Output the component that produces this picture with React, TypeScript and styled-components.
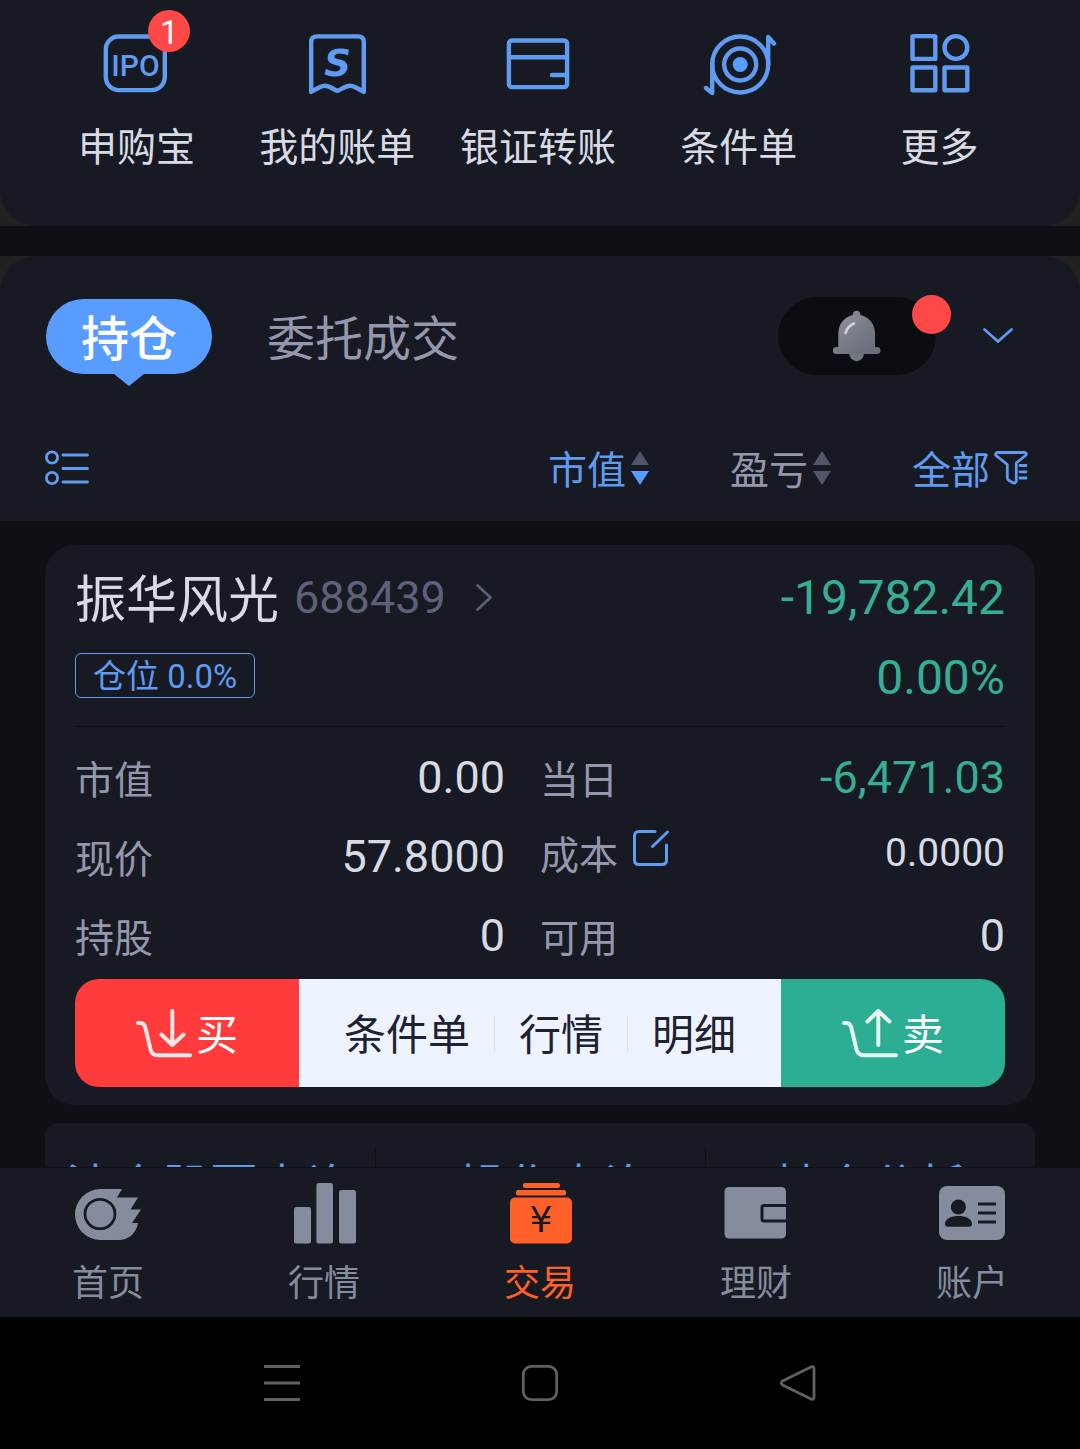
import React from 'react';
import styled, { createGlobalStyle, css } from 'styled-components';

const c = {
    page: '#0d1015',
    panel: '#171a22',
    corner: '#212121',
    blue: '#5f9bf0',
    pill: '#599cff',
    text: '#d8dae5',
    muted: '#9597ad',
    dim: '#5e6179',
    green: '#35ae93',
    badge: '#ff4848',
    nav: '#858c9e',
    orange: '#ff6029',
}

const GlobalStyle = createGlobalStyle`
    * {
        box-sizing: border-box;
    }

    body {
        background: #000;
        color: ${c.text};
        font-family: Roboto, 'Noto Sans CJK SC', sans-serif;
        margin: 0;
    }

    button {
        background: none;
        border: 0;
        color: inherit;
        cursor: pointer;
        font: inherit;
        margin: 0;
        padding: 0;
        white-space: nowrap;
    }

    a {
        color: inherit;
        text-decoration: none;
        white-space: nowrap;
    }

    svg {
        display: block;
        flex: none;
        fill: none;
        overflow: visible;
        stroke-linecap: round;
        stroke-linejoin: round;
    }
`

// Chinese glyphs sit high on the Roboto baseline, the padding centres them again
const Label = styled.span`
    display: block;
    padding-top: 6px;
`

const Screen = styled.div`
    display: flex;
    flex-direction: column;
    height: 100vh;
`

const Content = styled.main`
    background: ${c.page};
    flex: 1;
    min-height: 0;
    overflow-y: auto;
    scrollbar-width: none;
`

const Backing = styled.div`
    background: ${c.corner};

    & + & {
        margin-top: 30px;
    }
`

const Shortcuts = styled.nav`
    background: ${c.panel};
    border-radius: 0 0 36px 36px;
    display: grid;
    grid-template-columns: repeat(5, 1fr);
    padding: 28px 40px 54px 36px;
`

const Shortcut = styled.a`
    align-items: center;
    display: flex;
    flex-direction: column;
    font-size: 39px;
    gap: 24px;
    line-height: 48px;
`

const ShortcutIcon = styled.span`
    position: relative;

    svg {
        stroke: ${c.blue};
        stroke-width: 4.4;
    }
`

const Badge = styled.span`
    background: ${c.badge};
    border-radius: 50%;
    color: #fff;
    font-size: 33px;
    height: 42px;
    line-height: 46px;
    position: absolute;
    right: -18px;
    text-align: center;
    top: -18px;
    width: 42px;
`

const HoldingsHead = styled.section`
    background: ${c.panel};
    border-radius: 36px 36px 0 0;
    padding: 41px 0 2px;
`

const TabRow = styled.div`
    align-items: center;
    display: flex;
    gap: 55px;
    height: 78px;
    padding: 0 67px 0 46px;
`

const Tab = styled.button<{ $active?: boolean }>`
    color: ${c.muted};
    font-size: 48px;
    line-height: 69px;

    ${props => props.$active && css`
        background: ${c.pill};
        border-radius: 38px;
        color: #fff;
        font-weight: 500;
        padding: 0 35px;
        position: relative;

        &::after {
            border: 15px solid transparent;
            border-bottom: 0;
            border-top: 12px solid ${c.pill};
            content: '';
            left: 50%;
            margin-left: -15px;
            position: absolute;
            top: 100%;
        }
    `}
`

const Tools = styled.div`
    align-items: center;
    display: flex;
    gap: 47px;
    margin-left: auto;
`

const BellButton = styled.button`
    align-items: center;
    background: #0b0d12;
    border-radius: 39px;
    display: flex;
    height: 78px;
    justify-content: center;
    position: relative;
    width: 158px;
`

const Dot = styled.span`
    background: ${c.badge};
    border-radius: 50%;
    height: 39px;
    position: absolute;
    right: -15px;
    top: -2px;
    width: 39px;
`

const FilterRow = styled.div`
    align-items: center;
    display: flex;
    gap: 80px;
    height: 102px;
    margin-top: 42px;
    padding: 0 52px 0 45px;
`

const ViewButton = styled.button`
    margin-right: auto;
`

const SortButton = styled.button<{ $active?: boolean }>`
    align-items: center;
    color: ${props => props.$active ? c.blue : c.muted};
    display: flex;
    font-size: 39px;
    gap: 4px;
    line-height: 48px;
`

const Cards = styled.div`
    display: flex;
    flex-direction: column;
    gap: 18px;
    padding: 24px 45px;
`

const Card = styled.article`
    background: ${c.panel};
    border-radius: 30px;
    padding: 23px 30px 18px;
`

const CardHead = styled.header`
    border-bottom: 1px solid ${c.page};
    display: flex;
    justify-content: space-between;
    padding-bottom: 18px;
`

const StockInfo = styled.div`
    align-items: flex-start;
    display: flex;
    flex-direction: column;
    gap: 25px;
`

const StockTitle = styled.a`
    align-items: center;
    display: flex;
    font-size: 51px;
    line-height: 54px;
`

const StockCode = styled.span`
    color: ${c.dim};
    font-size: 45px;
    margin: 0 29px 0 15px;
`

const PositionTag = styled.span`
    border: 1px solid ${c.blue};
    border-radius: 6px;
    color: ${c.blue};
    font-size: 33px;
    line-height: 40px;
    padding: 3px 17px 0;
`

const Profit = styled.div`
    color: ${c.green};
    display: flex;
    flex-direction: column;
    font-size: 48px;
    gap: 20px;
    line-height: 60px;
    text-align: right;
`

const Figures = styled.dl`
    align-items: start;
    display: grid;
    grid-template-columns: 1fr 1fr;
    margin: 24px 0 16px;
    row-gap: 25px;
`

const Figure = styled.div`
    align-items: center;
    display: flex;
    justify-content: space-between;

    &:nth-child(odd) {
        padding-right: 35px;
    }

    dt {
        align-items: flex-start;
        color: ${c.muted};
        display: flex;
        font-size: 39px;
        gap: 15px;
        line-height: 40px;
    }
`

const FigureValue = styled.dd<{ $small?: boolean; $down?: boolean }>`
    color: ${props => props.$down ? c.green : c.text};
    font-size: ${props => props.$small ? '39px' : '45px'};
    line-height: ${props => props.$small ? '46px' : '54px'};
    margin: 0;
`

const Actions = styled.div`
    border-radius: 24px;
    display: flex;
    font-size: 42px;
    height: 108px;
    overflow: hidden;
`

const TradeButton = styled.button<{ $side: 'buy' | 'sell' }>`
    align-items: center;
    background: ${props => props.$side === 'buy' ? '#ff3b3b' : '#2cae94'};
    color: #fff;
    display: flex;
    flex: 0 0 224px;
    gap: 4px;
    justify-content: center;
    line-height: 48px;
`

const MoreActions = styled.div`
    align-items: center;
    background: #eef4ff;
    color: #1d2130;
    display: flex;
    flex: 1;
    justify-content: center;

    button {
        line-height: 30px;
        padding: 0 24px;
    }

    button + button {
        border-left: 1px solid #dcdfea;
    }
`

const Links = styled.div`
    align-items: center;
    background: ${c.panel};
    border-radius: 12px;
    color: ${c.blue};
    display: grid;
    font-size: 48px;
    grid-template-columns: repeat(3, 1fr);
    height: 120px;
    line-height: 62px;
    text-align: center;

    a {
        padding-top: 10px;
    }

    a + a {
        border-left: 1px solid ${c.page};
    }
`

const TabBar = styled.nav`
    background: ${c.panel};
    border-top: 1px solid #0f1117;
    display: grid;
    grid-template-columns: repeat(5, 1fr);
    height: 150px;
    padding-top: 13px;
`

const TabBarItem = styled.a<{ $active?: boolean }>`
    align-items: center;
    color: ${props => props.$active ? c.orange : c.nav};
    display: flex;
    flex-direction: column;
    font-size: 36px;
    gap: 17px;
    line-height: 44px;
`

const SystemBar = styled.div`
    align-items: center;
    background: #000;
    display: flex;
    gap: 222px;
    height: 132px;
    justify-content: center;

    svg {
        stroke: #606060;
        stroke-width: 2.8;
    }
`

const IpoIcon = () => (
    <svg width="72" height="72" viewBox="0 0 72 72">
        <rect x="5.8" y="8.5" width="59" height="53.6" rx="13" />
        <text
            x="35.5"
            y="47.5"
            textAnchor="middle"
            fontFamily="Roboto, sans-serif"
            fontSize="30"
            fontWeight="500"
            fill={c.blue}
            stroke="none"
        >
            IPO
        </text>
    </svg>
)

const BillIcon = () => (
    <svg width="72" height="72" viewBox="0 0 72 72">
        <path d="M10.2 64V14Q10.2 8.4 16 8.4H57Q62.8 8.4 62.8 14V64C58 61 53 57.8 49 57.8C44 57.8 40 62 36.4 62.8C33 62 29 57.8 24 57.8C20 57.8 15 61 10.2 64Z" />
        <text
            x="36.5"
            y="47.5"
            textAnchor="middle"
            fontFamily="'DejaVu Sans', sans-serif"
            fontSize="37"
            fontStyle="italic"
            fontWeight="700"
            fill={c.blue}
            stroke="none"
        >
            S
        </text>
    </svg>
)

const TransferIcon = () => (
    <svg width="72" height="72" viewBox="0 0 72 72">
        <rect x="6.9" y="12.5" width="58.2" height="46.6" rx="3" />
        <path d="M7 29.3H65M50 47H65" />
    </svg>
)

const TargetIcon = () => (
    <svg width="72" height="72" viewBox="0 0 72 72">
        <circle cx="37.2" cy="36.5" r="28" />
        <circle cx="37.2" cy="36.5" r="16" />
        <circle cx="37.2" cy="36.5" r="7.5" fill={c.pill} stroke="none" />
        <path d="M65.2 37V9L71 15.5M9.2 36V65L3 60" />
    </svg>
)

const MoreIcon = () => (
    <svg width="72" height="72" viewBox="0 0 72 72">
        <rect x="8.5" y="8.1" width="22.8" height="22.8" rx="0.5" />
        <circle cx="51.9" cy="19.5" r="11.4" />
        <rect x="8.5" y="39.5" width="22.8" height="22.8" rx="0.5" />
        <rect x="40.5" y="39.5" width="22.8" height="22.8" rx="0.5" />
    </svg>
)

const BellIcon = () => (
    <svg width="48" height="52" viewBox="0 0 48 52">
        <defs>
            <linearGradient id="bell" x1="0" y1="0" x2="1" y2="1">
                <stop offset="0" stopColor="#9496a0" />
                <stop offset="0.5" stopColor="#777b88" />
                <stop offset="1" stopColor="#666a78" />
            </linearGradient>
        </defs>
        <circle cx="23.6" cy="44" r="7.2" fill="#6f7b80" />
        <circle cx="23.6" cy="4.5" r="3.8" fill="#80858c" />
        <path
            d="M5.3 23A18.3 18.3 0 0 1 42 23V37H44A3.4 3.4 0 0 1 44 44H3.4A3.4 3.4 0 0 1 3.4 37H5.3Z"
            fill="url(#bell)"
        />
        <path d="M12.5 23Q14.5 16 21 13.500" stroke="#d3d4da" strokeWidth="2.6" />
    </svg>
)

const ChevronDown = () => (
    <svg width="30" height="16" viewBox="0 0 30 16">
        <path d="M1.5 1.5L15 13.5L28.5 1.5" stroke={c.blue} strokeWidth="2.8" />
    </svg>
)

const ChevronRight = () => (
    <svg width="18" height="30" viewBox="0 0 18 30">
        <path d="M2.5 2.5L15.5 14.5L2.5 26.5" stroke={c.dim} strokeWidth="2.8" />
    </svg>
)

const ListIcon = () => (
    <svg width="45" height="36" viewBox="0 0 45 36" stroke={c.blue} strokeWidth="2.8">
        <circle cx="7" cy="7.5" r="5.6" />
        <circle cx="7" cy="28" r="5.6" />
        <path d="M18 5H42.5M18 18.5H42.5M18 32H42.5" />
    </svg>
)

const FunnelIcon = () => (
    <svg width="34" height="36" viewBox="0 0 34 36" stroke={c.blue} strokeWidth="2.8">
        <path d="M3 2.5H31Q33.5 3.5 31.5 5.5L22.3 13V31Q21.5 34 18.5 32.6L14.8 30.3Q13.3 29.3 13.3 27.5V14.5L2 5.5Q1 3.5 3 2.5Z" />
        <path d="M26 15.5H32M26 21.8H32M26 28H32" />
    </svg>
)

const SortArrows = ({ active = false }: { active?: boolean }) => (
    <svg width="20" height="36" viewBox="0 0 20 36">
        <path d="M10 1L19 15H1Z" fill="#53556a" />
        <path d="M10 35L19 21H1Z" fill={active ? c.pill : '#53556a'} />
    </svg>
)

const EditIcon = () => (
    <svg width="36" height="36" viewBox="0 0 36 36" stroke={c.blue} strokeWidth="3">
        <path d="M22 1.5H6Q1.5 1.5 1.5 6V30Q1.5 34.5 6 34.5H29Q33.5 34.5 33.5 30V15" />
        <path d="M19.5 16.5L34.5 2" />
    </svg>
)

const CartIcon = ({ up = false }: { up?: boolean }) => (
    <svg width="56" height="50" viewBox="0 0 56 50" stroke="#fff" strokeOpacity="0.88" strokeWidth="4">
        <path d="M2 15H4.5Q8.2 15 9.3 19.5L14.5 41.5Q16 47.2 21.5 47.2H54" />
        <path d={up ? 'M36.3 37V3M25.5 13.5L36.3 3L47.5 13.5' : 'M36.3 3V37M25.5 26.5L36.3 37L47.5 26.5'} />
    </svg>
)

const HomeIcon = () => (
    <svg width="72" height="64" viewBox="0 0 72 64">
        <path
            d="M50 8L45 16.5H66L58.5 28.5H69L60 42H66C64 53 56 59 46.5 59H28.5A25.5 25.5 0 0 1 28.5 8Z"
            fill={c.nav}
        />
        <ellipse cx="28" cy="33" rx="15" ry="14.7" stroke={c.panel} strokeWidth="2.8" />
    </svg>
)

const MarketIcon = () => (
    <svg width="72" height="64" viewBox="0 0 72 64">
        <g fill={c.nav}>
            <rect x="6" y="26" width="17" height="36.5" rx="2.5" />
            <rect x="28.4" y="2" width="16.6" height="60.5" rx="2.5" />
            <rect x="51" y="9" width="17" height="53.5" rx="2.5" />
        </g>
    </svg>
)

const TradeIcon = () => (
    <svg width="72" height="64" viewBox="0 0 72 64">
        <g fill={c.orange}>
            <rect x="19" y="2" width="37" height="5" rx="2" />
            <rect x="12" y="9" width="50" height="5.5" rx="2" />
            <rect x="6" y="16.5" width="62" height="46" rx="5" />
        </g>
        <text
            x="37"
            y="51"
            textAnchor="middle"
            fontFamily="'DejaVu Sans', sans-serif"
            fontSize="36"
            fill={c.panel}
        >
            ¥
        </text>
    </svg>
)

const WalletIcon = () => (
    <svg width="72" height="64" viewBox="0 0 72 64">
        <rect x="4.5" y="6" width="61.5" height="51.5" rx="4.5" fill={c.nav} />
        <path d="M66 24.5H44Q42 24.5 42 26.5V38Q42 40 44 40H66" stroke={c.panel} strokeWidth="3" />
    </svg>
)

const AccountIcon = () => (
    <svg width="72" height="64" viewBox="0 0 72 64">
        <rect x="3" y="5" width="66" height="54" rx="8" fill={c.nav} />
        <g fill={c.panel}>
            <circle cx="22.4" cy="26" r="7.6" />
            <path d="M9 43C9 37.5 15.5 35 22.5 35S36 37.5 36 43Q36 45.8 33 45.8H12Q9 45.8 9 43Z" />
        </g>
        <path d="M42 23H60M42 32H60M42 41H60" stroke={c.panel} strokeWidth="3" strokeLinecap="butt" />
    </svg>
)

const shortcuts = [
    { label: '申购宝', icon: <IpoIcon />, count: 1 },
    { label: '我的账单', icon: <BillIcon /> },
    { label: '银证转账', icon: <TransferIcon /> },
    { label: '条件单', icon: <TargetIcon /> },
    { label: '更多', icon: <MoreIcon /> },
]

const figures = [
    { label: '市值', value: '0.00' },
    { label: '当日', value: '-6,471.03', down: true },
    { label: '现价', value: '57.8000' },
    { label: '成本', value: '0.0000', editable: true },
    { label: '持股', value: '0' },
    { label: '可用', value: '0' },
]

const navItems = [
    { label: '首页', icon: <HomeIcon /> },
    { label: '行情', icon: <MarketIcon /> },
    { label: '交易', icon: <TradeIcon /> },
    { label: '理财', icon: <WalletIcon /> },
    { label: '账户', icon: <AccountIcon /> },
]

const HoldingCard = () => (
    <Card>
        <CardHead>
            <StockInfo>
                <StockTitle href="#stock">
                    <Label>振华风光</Label>
                    <StockCode>688439</StockCode>
                    <ChevronRight />
                </StockTitle>
                <PositionTag>仓位 0.0%</PositionTag>
            </StockInfo>
            <Profit>
                <span>-19,782.42</span>
                <span>0.00%</span>
            </Profit>
        </CardHead>
        <Figures>
            {figures.map(item => (
                <Figure key={item.label}>
                    <dt>
                        <Label>{item.label}</Label>
                        {item.editable && (
                            <button type="button" aria-label="成本">
                                <EditIcon />
                            </button>
                        )}
                    </dt>
                    <FigureValue $down={item.down} $small={item.editable}>{item.value}</FigureValue>
                </Figure>
            ))}
        </Figures>
        <Actions>
            <TradeButton type="button" $side="buy">
                <CartIcon />
                <Label>买</Label>
            </TradeButton>
            <MoreActions>
                <button type="button"><Label>条件单</Label></button>
                <button type="button"><Label>行情</Label></button>
                <button type="button"><Label>明细</Label></button>
            </MoreActions>
            <TradeButton type="button" $side="sell">
                <CartIcon up />
                <Label>卖</Label>
            </TradeButton>
        </Actions>
    </Card>
)

const App = () => {

    const [tab, setTab] = React.useState('持仓')
    const [sort, setSort] = React.useState('市值')

    return (
        <Screen>
            <GlobalStyle />
            <Content>
                <Backing>
                    <Shortcuts>
                        {shortcuts.map(item => (
                            <Shortcut key={item.label} href="#shortcut">
                                <ShortcutIcon>
                                    {item.icon}
                                    {item.count && <Badge>{item.count}</Badge>}
                                </ShortcutIcon>
                                {item.label}
                            </Shortcut>
                        ))}
                    </Shortcuts>
                </Backing>
                <Backing>
                    <HoldingsHead>
                        <TabRow>
                            {['持仓', '委托成交'].map(name => (
                                <Tab key={name} type="button" $active={tab === name} onClick={() => setTab(name)}>
                                    <Label>{name}</Label>
                                </Tab>
                            ))}
                            <Tools>
                                <BellButton type="button" aria-label="消息">
                                    <BellIcon />
                                    <Dot />
                                </BellButton>
                                <button type="button" aria-label="展开">
                                    <ChevronDown />
                                </button>
                            </Tools>
                        </TabRow>
                        <FilterRow>
                            <ViewButton type="button" aria-label="列表">
                                <ListIcon />
                            </ViewButton>
                            {['市值', '盈亏'].map(name => (
                                <SortButton key={name} type="button" $active={sort === name} onClick={() => setSort(name)}>
                                    <Label>{name}</Label>
                                    <SortArrows active={sort === name} />
                                </SortButton>
                            ))}
                            <SortButton type="button" $active>
                                <Label>全部</Label>
                                <FunnelIcon />
                            </SortButton>
                        </FilterRow>
                    </HoldingsHead>
                </Backing>
                <Cards>
                    <HoldingCard />
                    <Links>
                        <a href="#closed">清仓股票查询</a>
                        <a href="#t">T操作查询</a>
                        <a href="#analysis">持仓分析</a>
                    </Links>
                </Cards>
            </Content>
            <TabBar>
                {navItems.map(item => (
                    <TabBarItem key={item.label} href="#nav" $active={item.label === '交易'}>
                        {item.icon}
                        {item.label}
                    </TabBarItem>
                ))}
            </TabBar>
            <SystemBar>
                <button type="button" aria-label="菜单">
                    <svg width="36" height="36" viewBox="0 0 36 36">
                        <path d="M0 1.5H36M0 18H36M0 34.5H36" strokeLinecap="butt" />
                    </svg>
                </button>
                <button type="button" aria-label="主屏幕">
                    <svg width="36" height="36" viewBox="0 0 36 36">
                        <rect x="1.3" y="1.3" width="33.4" height="33.4" rx="8" />
                    </svg>
                </button>
                <button type="button" aria-label="返回">
                    <svg width="36" height="36" viewBox="0 0 36 36">
                        <path d="M31 2Q34 0.5 34 4V32Q34 35.5 31 34L2.5 20Q0 18 2.5 16Z" />
                    </svg>
                </button>
            </SystemBar>
        </Screen>
    )
}

export default App
